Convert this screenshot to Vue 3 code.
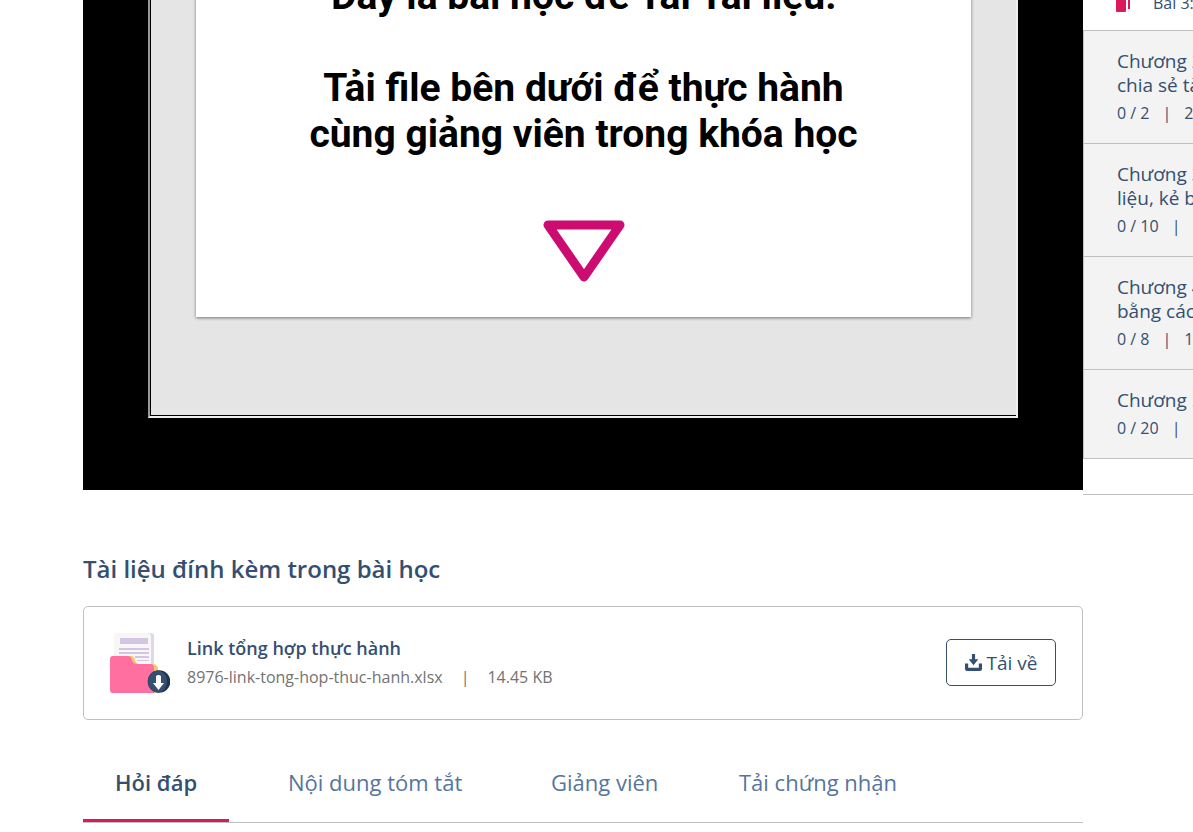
<script setup>
import { ref } from 'vue'

const chapters = [
  { lines: ['Chương 2: Kết nối,', 'chia sẻ tài liệu'], done: '0 / 2', time: '24 phút' },
  { lines: ['Chương 3: Nhập dữ', 'liệu, kẻ bảng'], done: '0 / 10', time: '58 phút' },
  { lines: ['Chương 4: Tính toán', 'bằng các hàm'], done: '0 / 8', time: '1 giờ' },
  { lines: ['Chương 5: Thực hành'], done: '0 / 20', time: '2 giờ' },
]
const tabs = ['Hỏi đáp', 'Nội dung tóm tắt', 'Giảng viên', 'Tải chứng nhận']
const active = ref(0)
</script>

<template>
  <div class="page">
    <main class="main">
      <section class="video">
        <div class="frame">
          <div class="slide">
            <p>Đây là bài học để Tải Tài liệu.</p>
            <p class="second">Tải file bên dưới để thực hành<br />cùng giảng viên trong khóa học</p>
            <svg class="triangle" width="82" height="62" viewBox="0 0 82 62">
              <path d="M5 5H77L41 57Z" fill="none" stroke="#cd0c72" stroke-width="9" stroke-linejoin="round" />
            </svg>
          </div>
        </div>
      </section>

      <h2>Tài liệu đính kèm trong bài học</h2>
      <article class="file">
        <svg class="folder" width="60" height="61" viewBox="0 -1 60 61">
          <path d="M7 0H39L41 3V50H4V3Q4 0 7 0Z" fill="#f8f7f5" />
          <path d="M38 0H41Q44 0 44 3V36H41V3Q41 1 38 0Z" fill="#dfd7ea" />
          <path d="M10 5H38V11H10ZM9 15H39V17H9ZM9 19H39V21H9ZM25 23H39V25H25ZM27 27H39V28H27Z" fill="#d4c5e3" />
          <path d="M19 23H22Q25 24 25 27Q26 31 29 31H44Q48 32 48 36V60H43V34L22 31Z" fill="#f2ca72" />
          <path d="M3 23H18Q21 23 22 27Q23 31 27 31H40Q44 31 44 35V60H3Q0 60 0 57V26Q0 23 3 23Z" fill="#ff6f9f" />
          <circle cx="49" cy="48.500" r="11.300" fill="#21334c" />
          <path d="M49 37.500A11 11 0 0 0 49 59.500Q57 57 57 48.500T49 37.500Z" fill="#344f70" />
          <path d="M46 43Q48.500 41 51 43V50H54L48.500 57L43 50H46Z" fill="#fff" />
        </svg>
        <div class="info">
          <h3>Link tổng hợp thực hành</h3>
          <p>8976-link-tong-hop-thuc-hanh.xlsx<span class="bar">|</span>14.45 KB</p>
        </div>
        <button class="download" type="button">
          <svg width="17" height="17" viewBox="0 0 16 16" fill="#344f70">
            <path d="M6.500 0H9.500V5H12.500L8 10.500L3.500 5H6.500Z" />
            <path d="M0 9H3V13H13V9H16V14Q16 16 14 16H2Q0 16 0 14Z" />
          </svg>
          Tải về
        </button>
      </article>

      <nav class="tabs">
        <button v-for="(tab, i) in tabs" :key="tab" type="button" :class="{ active: i === active }" @click="active = i">{{ tab }}</button>
      </nav>
    </main>

    <aside class="sidebar">
      <div class="lesson">
        <svg width="16" height="17" viewBox="0 0 16 17" fill="#da1a5b">
          <rect width="10" height="17" rx="1" /><rect x="12" width="2" height="14" />
        </svg>
        <span>Bài 3: Tải tài liệu</span>
      </div>
      <div v-for="c in chapters" :key="c.lines[0]" class="chapter">
        <h4><span v-for="l in c.lines" :key="l">{{ l }}</span></h4>
        <p>{{ c.done }}<span class="bar">|</span>{{ c.time }}</p>
      </div>
    </aside>
  </div>
</template>

<style>
body { margin: 0; background: #fff; overflow: hidden; }
</style>

<style scoped>
.page {
  display: grid;
  grid-template-columns: minmax(0, 1fr) 110px;
  align-items: start;
  padding-left: 83px;
  color: #344f70;
  font-family: "Open Sans", "Noto Sans", sans-serif;
}
h2, h3, h4, p { margin: 0; }
button { font: inherit; color: inherit; cursor: pointer; background: none; }
.video {
  box-sizing: border-box;
  display: flex;
  height: 490px;
  padding: 0 65px 72px;
  background: #000;
}
.frame {
  box-sizing: border-box;
  flex: 1;
  display: flex;
  flex-direction: column;
  justify-content: flex-end;
  overflow: hidden;
  padding: 0 45px 99px 46px;
  background: #e5e5e5;
  border: solid #efefef;
  border-width: 0 2px 2px;
  border-left-color: #999;
  box-shadow: inset 1px -1px #000;
}
.slide {
  flex: none;
  display: flex;
  flex-direction: column;
  align-items: center;
  padding: 48px 0 35px;
  background: #fff;
  box-shadow: 0 1px 3px rgba(0, 0, 0, 0.5);
  color: #000;
  font: 700 39px/46px Roboto, sans-serif;
  text-align: center;
  white-space: nowrap;
}
.second { margin-top: 46px; }
.triangle { margin-top: 63px; }
h2 { margin-top: 61px; font-size: 24px; line-height: 36px; font-weight: 600; }
.file {
  display: flex;
  align-items: center;
  margin-top: 19px;
  padding: 25px 26px 26px;
  border: 1px solid #c0c0c0;
  border-radius: 5px;
}
.folder { flex: none; }
.info { flex: 1; margin-left: 17px; padding-bottom: 2px; }
h3 { font-size: 18px; line-height: 30px; font-weight: 600; }
.info p { color: #737373; font-size: 16px; line-height: 28px; }
.info .bar { margin: 0 18px; }
.bar { margin: 0 13px; }
.download {
  display: flex;
  align-items: center;
  justify-content: center;
  gap: 5px;
  width: 110px;
  height: 47px;
  padding: 0;
  border: 1px solid #344f70;
  border-radius: 5px;
  font-size: 19px;
}
.tabs {
  display: grid;
  grid-template-columns: 173px 263px 188px auto;
  justify-items: start;
  margin-top: 24px;
  border-bottom: 1px solid #c0c0c0;
}
.tabs button {
  height: 78px;
  padding: 0 32px;
  border: 0;
  border-bottom: 3px solid transparent;
  color: #56759c;
  font-size: 22px;
  white-space: nowrap;
}
.tabs .active { color: #344f70; font-weight: 600; border-bottom-color: #da1a5b; }
.sidebar {
  overflow: hidden;
  padding-bottom: 35px;
  border-bottom: 1px solid #c0c0c0;
  white-space: nowrap;
}
.lesson {
  display: flex;
  align-items: flex-end;
  gap: 21px;
  height: 12px;
  padding: 0 0 18px 33px;
  font-size: 16px;
  line-height: 18px;
}
.lesson svg { flex: none; }
.chapter {
  padding: 18px 0 18px 33px;
  background: #f3f3f3;
  border-top: 1px solid #c0c0c0;
  border-left: 1px solid #c0c0c0;
}
.chapter:last-child { border-bottom: 1px solid #c0c0c0; }
h4 { font-size: 19px; line-height: 24px; font-weight: 500; }
h4 span { display: block; }
.chapter p { margin-top: 4px; font-size: 16px; line-height: 24px; }
</style>
